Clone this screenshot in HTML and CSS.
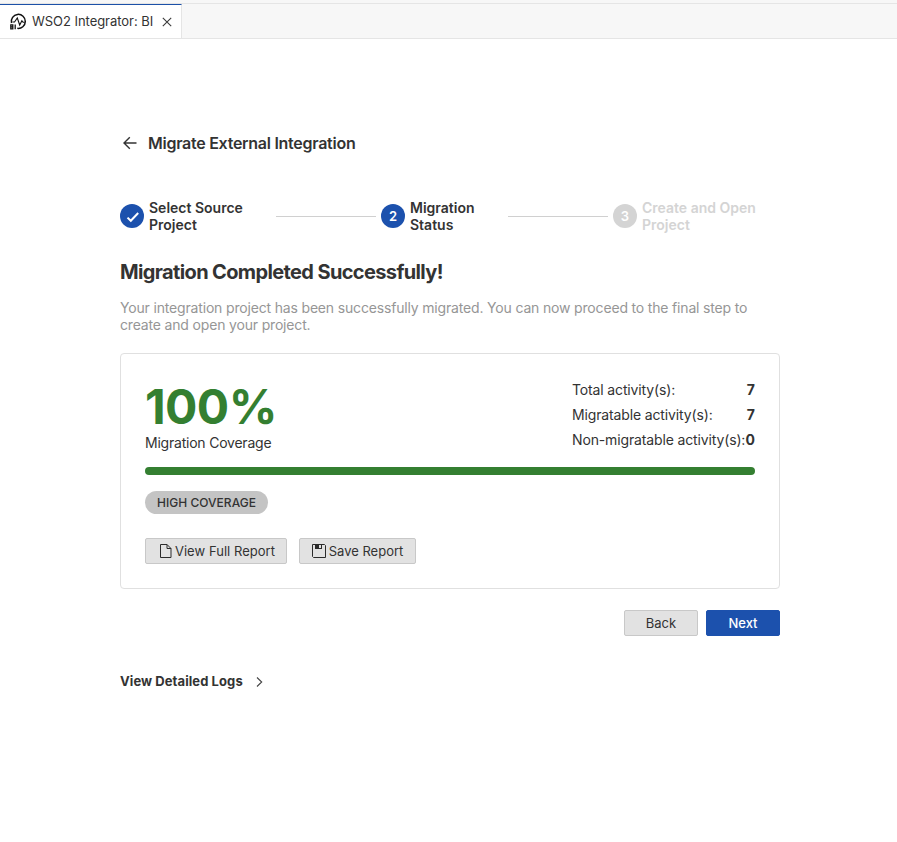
FILE: index.html
```html
<!DOCTYPE html>
<html lang="en">
<head>
<meta charset="utf-8">
<title>WSO2 Integrator: BI</title>
<link rel="stylesheet" href="styles.css">
</head>
<body>
<header class="tabbar">
  <div class="tab">
    <svg class="tab-logo" width="18" height="18" viewBox="0 0 18 18" fill="none" stroke="#111" stroke-width="1.5">
      <path d="M2.500 10A7 7 0 1 1 8.300 15.300"/>
      <path d="M3.500 9h2l2.800-4 2.400 7 2.200-4.200 1.200 1.500h1.500" stroke-width="1.1"/>
      <path d="M1.800 11.800v4h2v-4zM1.800 13.800h2M6.200 11.600v4.700" stroke-width="1.3"/>
    </svg>
    <span class="tab-title">WSO2 Integrator: BI</span>
    <svg class="tab-close" width="10" height="10" viewBox="0 0 10 10" stroke="#3b3b3b" stroke-width="1.1"><path d="M.8.8l8.4 8.4M9.2.8L.8 9.2"/></svg>
  </div>
</header>
<main class="page">
  <div class="heading">
    <svg width="14" height="14" viewBox="0 0 14 14" fill="none" stroke="#333" stroke-width="1.4"><path d="M13.5 7H1.2M6.8 1.2L1 7l5.8 5.8"/></svg>
    <h1>Migrate External Integration</h1>
  </div>
  <div class="stepper">
    <div class="step step-one">
      <span class="dot"><svg class="check" width="14" height="12" viewBox="0 0 14 12" fill="none" stroke="#fff" stroke-width="2"><path d="M1.500 6.600l3.300 3.200L12.200 2"/></svg></span>
      <span class="step-label">Select Source<br>Project</span>
    </div>
    <span class="line"></span>
    <div class="step step-two">
      <span class="dot">2</span>
      <span class="step-label">Migration<br>Status</span>
    </div>
    <span class="line"></span>
    <div class="step step-three">
      <span class="dot">3</span>
      <span class="step-label">Create and Open<br>Project</span>
    </div>
  </div>
  <h2>Migration Completed Successfully!</h2>
  <p class="description">Your integration project has been successfully migrated. You can now proceed to the final step to<br>create and open your project.</p>
  <section class="card">
    <div class="summary">
      <div>
        <div class="percent">100%</div>
        <div class="coverage">Migration Coverage</div>
      </div>
      <dl class="stats">
        <div><dt>Total activity(s):</dt><dd>7</dd></div>
        <div><dt>Migratable activity(s):</dt><dd>7</dd></div>
        <div><dt>Non-migratable activity(s):</dt><dd>0</dd></div>
      </dl>
    </div>
    <div class="progress"></div>
    <span class="badge">HIGH COVERAGE</span>
    <div class="report-actions">
      <button class="btn btn-view"><svg width="12" height="14" viewBox="0 0 12 14" fill="none" stroke="#2b2b2b"><path d="M.5.5h6.500l4 4v9H.5zM7 .5v4h4"/></svg><span>View Full Report</span></button>
      <button class="btn btn-save"><svg width="14" height="14" viewBox="0 0 14 14" fill="none" stroke="#2b2b2b"><path d="M.5.5h12l1 1v12H1.500l-1-1z"/><path d="M3 1h7v4H3z" fill="#2b2b2b" stroke="none"/><path d="M7 1h2v3H7z" fill="#e2e2e2" stroke="none"/></svg><span>Save Report</span></button>
    </div>
  </section>
  <div class="nav">
    <button class="btn">Back</button>
    <button class="btn btn-primary">Next</button>
  </div>
  <div class="logs">
    <span>View Detailed Logs</span>
    <svg width="7" height="10" viewBox="0 0 7 10" fill="none" stroke="#444" stroke-width="1.1"><path d="M1 .5L5.700 5 1 9.500"/></svg>
  </div>
</main>
</body>
</html>
```
FILE: styles.css
```css
* { box-sizing: border-box; }
body { margin: 0; background: #fff; color: #333; font: 14px/17px Inter, sans-serif; }
h1, h2, p, dl, dd { margin: 0; }
svg { display: block; flex: none; }
.tabbar { height: 39px; background: #f7f7f7; border-bottom: 1px solid #e5e5e5; padding-top: 4px; box-shadow: inset 0 3px 0 #f7f7f7, inset 0 4px 0 #e5e5e5; display: flex; }
.tab { width: 182px; height: 34px; background: #fff; border-top: 1px solid #1c51a8; border-right: 1px solid #e5e5e5; display: flex; align-items: center; padding-left: 9px; }
.tab-title { font-size: 13px; letter-spacing: -.04px; margin-left: 5px; width: 121px; white-space: nowrap; }
.tab-close { margin-left: 9px; }
.page { width: 660px; margin: 94px 0 0 120px; }
.heading { display: flex; align-items: center; height: 20px; padding-left: 3px; gap: 11px; }
h1 { font-size: 16px; line-height: 20px; font-weight: 600; letter-spacing: -.27px; }
.stepper { display: flex; align-items: center; margin-top: 46px; height: 34px; }
.step { display: flex; align-items: center; gap: 5px; font-weight: 600; white-space: nowrap; }
.step-one { width: 156px; }
.step-two { width: 127px; margin-left: 5px; }
.step-three { margin-left: 5px; color: #d4d4d4; }
.dot { width: 24px; height: 24px; border-radius: 50%; background: #1c51ad; color: #fff; display: flex; align-items: center; justify-content: center; font-size: 13px; }
.check { margin: 2px 0 0 1px; }
.step-three .dot { background: #d4d4d4; }
.line { width: 100px; height: 1px; background: #d0d0d0; }
h2 { margin-top: 27px; font-size: 20px; line-height: 24px; font-weight: 700; letter-spacing: -.63px; }
.description { margin-top: 15px; color: #969696; white-space: nowrap; letter-spacing: -.17px; }
.card { margin-top: 20px; height: 236px; border: 1px solid #e0e0e0; border-radius: 4px; padding: 24px; }
.summary { display: flex; justify-content: space-between; height: 89px; }
.percent { font-size: 48px; line-height: 48px; padding-top: 5px; font-weight: 700; letter-spacing: -.6px; color: #347f31; }
.coverage { margin-top: 3px; letter-spacing: -.22px; }
.stats { width: 183px; padding-top: 3px; }
.stats div { display: flex; justify-content: space-between; margin-bottom: 8px; white-space: nowrap; }
.stats dt { letter-spacing: -.14px; }
.stats dd { font-weight: 700; }
.progress { height: 8px; border-radius: 4px; background: #347f31; }
.badge { display: flex; align-items: center; justify-content: center; width: 123px; height: 23px; margin-top: 16px; border-radius: 12px; background: #c4c4c4; font-size: 12px; font-weight: 500; letter-spacing: .03px; }
.report-actions { display: flex; gap: 12px; margin-top: 24px; }
.btn { display: flex; align-items: center; justify-content: center; height: 26px; width: 74px; padding: 0; border: 1px solid #c8c8c8; border-radius: 2px; background: #e2e2e2; color: #333; font: 13px/16px Inter, sans-serif; white-space: nowrap; }
.btn-view { width: 142px; gap: 3px; padding-left: 3px; letter-spacing: .04px; }
.btn-save { width: 117px; gap: 3px; }
.btn-primary { background: #1c51ad; border-color: #1c51ad; color: #fff; font-weight: 500; }
.nav { display: flex; justify-content: flex-end; gap: 8px; margin-top: 21px; }
.logs { display: flex; align-items: center; margin-top: 37px; font-size: 13px; font-weight: 700; letter-spacing: .08px; gap: 13px; }
```
